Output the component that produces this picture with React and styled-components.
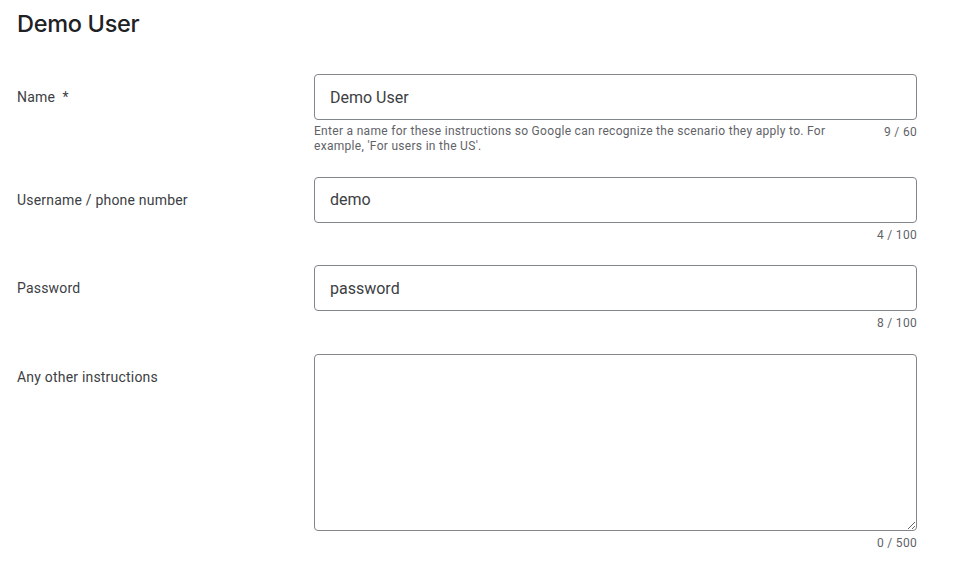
import React from 'react';
import styled, { createGlobalStyle } from 'styled-components';

const GlobalStyle = createGlobalStyle`
  body {
    margin: 0;
    background: #ffffff;
    font-family: Roboto, 'Liberation Sans', sans-serif;
    color: #202124;
  }
`;

const Page = styled.div`
  padding: 9px 38px 0 17px;
`;

const Title = styled.h1`
  margin: 0 0 36px;
  font-family: Inter, 'Open Sans', sans-serif;
  font-size: 23.5px;
  line-height: 29px;
  font-weight: 500;
  letter-spacing: -0.3px;
  color: #202124;
`;

const Form = styled.div`
  display: grid;
  grid-template-columns: 297px 1fr;
  row-gap: 22.5px;
`;

const Label = styled.div`
  font-size: 14px;
  line-height: 20px;
  color: #3c4043;
  padding-top: 13px;
  letter-spacing: 0.2px;
  white-space: pre;
`;

const Field = styled.div`
  display: flex;
  flex-direction: column;
`;

const TextInput = styled.input`
  box-sizing: border-box;
  width: 100%;
  height: 46px;
  padding: 0 15px;
  border: 1px solid #80868b;
  border-radius: 4px;
  font-family: Roboto, 'Liberation Sans', sans-serif;
  font-size: 16px;
  color: #3c4043;
  background: #fff;
  outline: none;
`;

const TextArea = styled.textarea`
  box-sizing: border-box;
  width: 100%;
  height: 177px;
  padding: 12px 15px;
  border: 1px solid #80868b;
  border-radius: 4px;
  font-family: Roboto, 'Liberation Sans', sans-serif;
  font-size: 16px;
  color: #3c4043;
  background: #fff;
  outline: none;
  display: block;
`;

const HelperRow = styled.div`
  display: flex;
  justify-content: space-between;
  align-items: flex-start;
  margin-top: 4px;
  font-size: 12px;
  line-height: 15px;
  letter-spacing: 0.3px;
  color: #5f6368;
`;

const Hint = styled.div`
  max-width: 530px;
`;

const Counter = styled.div`
  margin-left: auto;
  white-space: nowrap;
  padding-top: 1px;
`;

const fields = [
  {
    label: 'Name  *',
    value: 'Demo User',
    max: 60,
    hint: "Enter a name for these instructions so Google can recognize the scenario they apply to. For example, 'For users in the US'.",
  },
  { label: 'Username / phone number', value: 'demo', max: 100 },
  { label: 'Password', value: 'password', max: 100 },
  { label: 'Any other instructions', value: '', max: 500, multiline: true },
];

export default function App() {
  return (
    <>
      <GlobalStyle />
      <Page>
        <Title>Demo User</Title>
        <Form>
          {fields.map((f) => (
            <React.Fragment key={f.label}>
              <Label>{f.label}</Label>
              <Field>
                {f.multiline ? (
                  <TextArea value={f.value} readOnly />
                ) : (
                  <TextInput type="text" value={f.value} readOnly />
                )}
                <HelperRow>
                  {f.hint && <Hint>{f.hint}</Hint>}
                  <Counter>
                    {f.value.length} / {f.max}
                  </Counter>
                </HelperRow>
              </Field>
            </React.Fragment>
          ))}
        </Form>
      </Page>
    </>
  );
}
